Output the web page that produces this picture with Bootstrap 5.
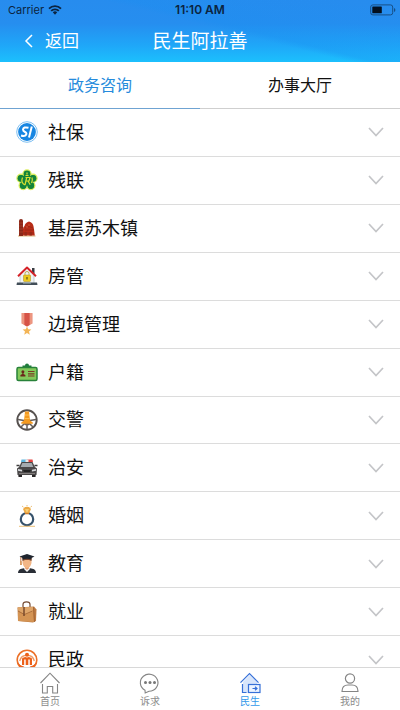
<!DOCTYPE html>
<html lang="zh-CN">
<head>
<meta charset="utf-8">
<meta name="viewport" content="width=device-width, initial-scale=1">
<title>民生阿拉善</title>
<link rel="stylesheet" href="https://cdn.jsdelivr.net/npm/bootstrap@5.3.0/dist/css/bootstrap.min.css">
<style>
body{font-family:Inter,"Noto Sans CJK SC",sans-serif;color:#111;background:#fff}
svg{display:block;flex:none}
.app-top{background:linear-gradient(14deg,transparent 54%,#1a8ef055 58%,transparent 92%),linear-gradient(#278cee 0,#268eef 38%,#1fa6f8 72%,#1cc0fd 100%)}
.status{height:20px;font-size:11px;line-height:20px;color:#0b2440}
.status time{font-size:12px;font-weight:600}
.titlebar{height:42px}
.titlebar h1{font-size:19px;line-height:44px}
.back{font-size:17px;line-height:42px;gap:12px}
.topics .nav-link{height:47px;font-size:16px;line-height:46px;color:#111;border-bottom:1px solid #cfcfcf!important}
.topics .nav-link.active{color:#268bdc;border-color:#6fa3d2!important}
.scroller{min-height:0;overflow-y:auto;scrollbar-width:none}
.scroller::-webkit-scrollbar{display:none}
.scroller .list-group{min-height:calc(100% + 16px)}
.scroller .list-group-item{min-height:44px;font-size:18px;line-height:20px;gap:10px;padding:0 16px;color:#111;border-color:#dcdcdc;border-width:0 0 1px}
.topic-name{padding-top:1px}
.tabbar{height:43px;border-top:1px solid #d8d8d8}
.tabbar a{font-size:10px;line-height:14px;color:#8b8b8b;padding-top:4px}
.tabbar a.active{color:#3299ea}
</style>
<script src="https://cdn.jsdelivr.net/npm/bootstrap@5.3.0/dist/js/bootstrap.bundle.min.js"></script>
</head>
<body class="vh-100 d-flex flex-column overflow-hidden">
<svg width="0" height="0" class="position-absolute" aria-hidden="true"><symbol id="chev" viewBox="0 0 16 10"><path d="M1 1l7 7.500 7-7.500" fill="none" stroke="#c4c5c8" stroke-width="1.700"/></symbol></svg>
<header class="app-top text-white">
  <div class="status row g-0 px-1">
    <div class="col d-flex align-items-center gap-1"><span class="ms-1">Carrier</span>
      <svg width="14" height="10" viewBox="0 0 14 10" fill="none" stroke="#0b2440" stroke-width="1.900"><path d="M1 3.600a8.600 8.600 0 0 1 12 0M3.200 5.900a5.400 5.400 0 0 1 7.600 0"/><path d="M4.800 7.300a3.200 3.200 0 0 1 4.400 0L7 9.700z" fill="#0b2440" stroke="none"/></svg>
    </div>
    <time class="col text-center">11:10 AM</time>
    <div class="col d-flex align-items-center justify-content-end">
      <svg width="26" height="12" viewBox="0 0 26 12"><rect x=".7" y=".9" width="22" height="10" rx="2.200" fill="none" stroke="#174f86"/><rect x="2.300" y="2.500" width="9.500" height="6.800" rx=".6" fill="#03101f"/><path d="M24 4v4q1.400-.6 1.400-2T24 4z" fill="#174f86"/></svg>
    </div>
  </div>
  <div class="titlebar row g-0">
    <div class="col"><button type="button" class="back btn p-0 border-0 rounded-0 text-white d-flex align-items-center ps-4">
      <svg width="9" height="14" viewBox="0 0 9 14"><path d="M8 1L2 7l6 6" fill="none" stroke="#fff" stroke-width="1.500"/></svg>返回</button></div>
    <h1 class="col-auto m-0 fw-normal">民生阿拉善</h1>
    <div class="col"></div>
  </div>
</header>
<nav class="topics nav nav-fill flex-nowrap">
  <button type="button" class="nav-link nav-item active p-0 border-0 bg-transparent">政务咨询</button>
  <button type="button" class="nav-link nav-item p-0 border-0 bg-transparent">办事大厅</button>
</nav>
<main class="scroller flex-grow-1">
<div class="list-group list-group-flush">
<button type="button" class="list-group-item list-group-item-action flex-fill d-flex align-items-center">
<svg width="22" height="22" viewBox="0 0 22 22"><circle cx="11" cy="11" r="10.300" fill="#fff" stroke="#5fb0ee" stroke-width=".8"/><circle cx="11" cy="11" r="8.900" fill="#1786e2"/><path d="M12.500 6.800Q7.500 5.500 7 8.500q0 1.600 2 2.500t1.200 2.500Q9 16 5 14.500M15.800 5.500L13 16.500" fill="none" stroke="#fff" stroke-width="2"/></svg>
<span class="topic-name flex-grow-1">社保</span><svg width="16" height="10"><use href="#chev"/></svg></button>
<button type="button" class="list-group-item list-group-item-action flex-fill d-flex align-items-center">
<svg width="22" height="22" viewBox="0 0 22 22"><g fill="#12833b" stroke="#dcee60" stroke-width="1.600"><circle cx="11" cy="5" r="3.900"/><circle cx="17" cy="9.300" r="3.900"/><circle cx="14.800" cy="16.500" r="3.900"/><circle cx="7.200" cy="16.500" r="3.900"/><circle cx="5" cy="9.300" r="3.900"/></g><g fill="#12833b"><circle cx="11" cy="5" r="3.400"/><circle cx="17" cy="9.300" r="3.400"/><circle cx="14.800" cy="16.500" r="3.400"/><circle cx="7.200" cy="16.500" r="3.400"/><circle cx="5" cy="9.300" r="3.400"/><circle cx="11" cy="11.300" r="5.500"/></g><path d="M6.500 8.500q-2 5 2.300 7.500M9.500 6.500h3M11 3.500v2M9.500 8.500h4.500l-1 3.500h-3M10.700 8.500l-1.700 7.500M12 12l2.200 3.700M16 8.500q1 3-.5 5.500" fill="none" stroke="#d8df32" stroke-width="1.200"/></svg>
<span class="topic-name flex-grow-1">残联</span><svg width="16" height="10"><use href="#chev"/></svg></button>
<button type="button" class="list-group-item list-group-item-action flex-fill d-flex align-items-center">
<svg width="22" height="22" viewBox="0 0 22 22"><path d="M2 19h17.500" stroke="#e2c38e" stroke-width="1.200"/><path d="M3 4q0-2 2-2t2 2v15H3z" fill="#8a2819"/><path d="M3 6h4M3 9h4M3 12h4M3 15h4" stroke="#b84631" stroke-width=".6"/><path d="M7 18.500V12q0-2 1.500-3 .6-3.300 4.500-4.500 4 1.200 4.500 4.800l.5 3 .8 6.200z" fill="#b82d18"/><path d="M9 11q4-3 8 0M9 13h9M7 16h11" stroke="#8f2414" stroke-width=".6" fill="none"/><path d="M8.500 18.500v-3q1.200-1.600 2.400 0v3M13.500 18.500v-3q1.200-1.600 2.400 0v3" fill="#962a18"/><path d="M12 8h2M10 10h2" stroke="#e26a42" stroke-width=".7"/></svg>
<span class="topic-name flex-grow-1">基层苏木镇</span><svg width="16" height="10"><use href="#chev"/></svg></button>
<button type="button" class="list-group-item list-group-item-action flex-fill d-flex align-items-center">
<svg width="22" height="22" viewBox="0 0 22 22"><path d="M16 3h2.500v6L16 7z" fill="#383c42"/><path d="M4 10l7-7 7 7v8.500H4z" fill="#eef2f4" stroke="#a2b3bb" stroke-width=".6"/><path d="M2 11.200L11 2.500l9 8.700" fill="none" stroke="#d52127" stroke-width="1.900" stroke-linejoin="round"/><rect x="7.500" y="10" width="7" height="6.500" rx=".7" fill="#ecca20" stroke="#b08d12" stroke-width=".5"/><path d="M9 10V8.500a2 2 0 0 1 4 0V10" fill="none" stroke="#bcaa51"/><path d="M11 12v2.500" stroke="#605216" stroke-width="1.200"/><path d="M1 17.500h20l.5 2.500H.5z" fill="#424e58"/><path d="M7 18h8" stroke="#a5b5bb"/></svg>
<span class="topic-name flex-grow-1">房管</span><svg width="16" height="10"><use href="#chev"/></svg></button>
<button type="button" class="list-group-item list-group-item-action flex-fill d-flex align-items-center">
<svg width="22" height="22" viewBox="0 0 22 22"><path d="M5.500 0h11v10.500L11 13.500l-5.500-3z" fill="#e98572"/><path d="M8.500 0h5v12L11 13.500 8.500 12z" fill="#d65347"/><path d="M7 0v11M15 0v11" stroke="#f5b79b" stroke-width=".7"/><path d="M11 13.500l1.200 2.800 3.200.2-2.400 2 .8 3.200-2.800-1.600-2.800 1.600.8-3.200-2.400-2 3.200-.2z" fill="#f3b557"/></svg>
<span class="topic-name flex-grow-1">边境管理</span><svg width="16" height="10"><use href="#chev"/></svg></button>
<button type="button" class="list-group-item list-group-item-action flex-fill d-flex align-items-center">
<svg width="22" height="22" viewBox="0 0 22 22"><path d="M6.500 7V4.500H9a2 2 0 1 1 4 0h2.500V7z" fill="#1f7c3c"/><rect x="1" y="6.500" width="20" height="13" rx="1.500" fill="#84c95b" stroke="#28823a" stroke-width="1.500"/><circle cx="6.900" cy="10.700" r="1.500" fill="#6b271a"/><path d="M6.300 11h1.200v2l1.900 1v1.600h-5V14l1.900-1z" fill="#6b271a"/><path d="M12 10.500h6.500M12 12.800h6.500M12 15h6.500" stroke="#7b3924" stroke-width="1.200"/></svg>
<span class="topic-name flex-grow-1">户籍</span><svg width="16" height="10"><use href="#chev"/></svg></button>
<button type="button" class="list-group-item list-group-item-action flex-fill d-flex align-items-center">
<svg width="22" height="22" viewBox="0 0 22 22"><circle cx="11" cy="11" r="9.700" fill="#fff" stroke="#56514f" stroke-width="1.900"/><path d="M2 10.500l6 1M20 10.500l-6 1M8 15l-3 3M14 15l3 3M11 15v5" stroke="#645e5a" stroke-width="1.500"/><circle cx="11" cy="13" r="3.600" fill="#766359"/><path d="M9 2.500h4l1 9 2.800 2v1.200H5.200v-1.200l2.800-2z" fill="#f49a20"/><path d="M9 6h4M8.600 9.500h4.800" stroke="#ffc050"/></svg>
<span class="topic-name flex-grow-1">交警</span><svg width="16" height="10"><use href="#chev"/></svg></button>
<button type="button" class="list-group-item list-group-item-action flex-fill d-flex align-items-center">
<svg width="22" height="22" viewBox="0 0 22 22"><path d="M5.500 2.500H11V5H5z" fill="#60b6df"/><path d="M11 2.500h5.500L17 5h-6z" fill="#e34542"/><path d="M9.500 2.500h3V5h-3z" fill="#e9e9e9"/><path d="M2 15h4v5H2.500zM16 15h4l-.5 5H16z" fill="#272425"/><path d="M5.500 5h11l2.500 5 2 1.500-.5 6.500h-19L1 11.500 3 10z" fill="#4a4849"/><path d="M6.300 6h9.400l1.600 4H4.700z" fill="#a5abb0"/><path d="M.5 8.500h3M18.500 8.500h3" stroke="#3e3c3c" stroke-width="1.500"/><path d="M2 12l4 .8v1.700l-4-.8zM20 12l-4 .8v1.700l4-.8z" fill="#d7dadd"/><path d="M7 13h8l-1 2H8z" fill="#222"/><path d="M3 16.500h16" stroke="#8a8583" stroke-width=".9"/></svg>
<span class="topic-name flex-grow-1">治安</span><svg width="16" height="10"><use href="#chev"/></svg></button>
<button type="button" class="list-group-item list-group-item-action flex-fill d-flex align-items-center">
<svg width="22" height="22" viewBox="0 0 22 22"><circle cx="11" cy="14.200" r="6.200" fill="none" stroke="#36526b" stroke-width="2.200"/><path d="M7 4l2-2h4l2 2-1.500 3.500L11 9.500 8.500 7.500z" fill="#edaa45"/><path d="M9 4l2 4 2-4z" fill="#f6cf77"/><path d="M6 1l1.500 1.200M16 1l-1.500 1.200M11 0v1.500M3 21.300h16" stroke="#ebc078"/><path d="M9 8.500h4" stroke="#ce7f2f" stroke-width="1.200"/></svg>
<span class="topic-name flex-grow-1">婚姻</span><svg width="16" height="10"><use href="#chev"/></svg></button>
<button type="button" class="list-group-item list-group-item-action flex-fill d-flex align-items-center">
<svg width="22" height="22" viewBox="0 0 22 22"><path d="M2 20q0-3.500 3.500-4.200L9 15h4l3.500.8Q20 16.500 20 20z" fill="#292e36"/><path d="M8.500 14.500h5L14 16l-3 3-3-3z" fill="#f5f5f5"/><path d="M9 12h4v3.200L11 17l-2-1.800z" fill="#e59b6e"/><path d="M6.500 5h9v5q-1 5-4.500 5t-4.500-5z" fill="#f2b686"/><path d="M6.500 4.500h9V8l-2.500-1H9L6.500 8z" fill="#7b482f"/><path d="M3.500 3.500L11 1l7.500 2.500L15.500 5v1.500Q11 5 6.500 6.500V5z" fill="#1f252e"/><path d="M4.800 4v6" stroke="#bc784d"/><path d="M4.200 8h1.400l.4 4H4z" fill="#d69a63"/></svg>
<span class="topic-name flex-grow-1">教育</span><svg width="16" height="10"><use href="#chev"/></svg></button>
<button type="button" class="list-group-item list-group-item-action flex-fill d-flex align-items-center">
<svg width="22" height="22" viewBox="0 0 22 22"><path d="M7 7V3.500Q7 .8 10.500.8T14 3.500V7" fill="none" stroke="#744a32" stroke-width="1.200"/><path d="M1.500 6.500L18 5.500l2.500 3-.5 11.500-3 1.500L2 20z" fill="#bd7b43"/><path d="M2 6.500h15l1 14.500-16-1z" fill="#d49454"/><path d="M1.500 6.500l16-.6-1 4.600-8 3.500-6-4z" fill="#dfa66a"/><path d="M2 10l6.500 3.500 8-3.500M17.500 6l1 15" fill="none" stroke="#9e602f" stroke-width=".8"/><path d="M8 6v9" stroke="#78482b" stroke-width="1.500"/></svg>
<span class="topic-name flex-grow-1">就业</span><svg width="16" height="10"><use href="#chev"/></svg></button>
<button type="button" class="list-group-item list-group-item-action flex-fill d-flex align-items-center">
<svg width="22" height="22" viewBox="0 0 22 22"><circle cx="11" cy="11" r="9.800" fill="#fff" stroke="#ec7027" stroke-width="1.600"/><path d="M3.700 12a7.500 7.500 0 0 1 14.600 0" fill="none" stroke="#f29a63" stroke-width="1.400"/><circle cx="11" cy="5.700" r="2" fill="#ec6019"/><path d="M6 16V9.500Q8.500 7 11 8.500 13.500 7 16 9.500V16h-2.200v-5.500h-1.500V16H9.700v-5.500H8.200V16z" fill="#ec6019"/><path d="M1.500 12q1.500 4.500 6.500 5.500l2 4Q3 20.500 1.500 12zM20.500 12q-1.500 4.500-6.500 5.500l-2 4q7-1 8.500-9.500z" fill="#ec6019"/></svg>
<span class="topic-name flex-grow-1">民政</span><svg width="16" height="10"><use href="#chev"/></svg></button>
</div>
</main>
<nav class="tabbar row g-0 bg-white flex-shrink-0">
<a href="#" class="col d-flex flex-column align-items-center text-decoration-none"><svg width="22" height="22" viewBox="0 0 22 22" fill="none" stroke="#858585" stroke-width="1.100"><path d="M1.500 11L11 1.200l9.500 9.800M3.500 12v9h4.800v-6.500h5.400V21h4.800v-9"/></svg>首页</a>
<a href="#" class="col d-flex flex-column align-items-center text-decoration-none"><svg width="22" height="22" viewBox="0 0 22 22"><path d="M6 18.200A8.800 8.500 0 1 1 10 19.200L6.200 21z" fill="none" stroke="#858585" stroke-width="1.100"/><g fill="#777"><circle cx="6.500" cy="10.500" r="1.500"/><circle cx="11" cy="10.500" r="1.500"/><circle cx="15.500" cy="10.500" r="1.500"/></g></svg>诉求</a>
<a href="#" class="active col d-flex flex-column align-items-center text-decoration-none" aria-current="page"><svg width="22" height="22" viewBox="0 0 22 22"><path d="M4 10l6.500-7 7.500 7v3H9.500v8H4z" fill="#d7e5fb"/><g fill="none" stroke="#3670d8" stroke-width="1.200"><path d="M1.500 10.700L10.500 1.500l9 9.200M3.500 12v8.500h4"/><rect x="9.500" y="12.500" width="11.500" height="8" fill="#edf4ff"/><path d="M13.500 16.500h4.500M16 14.700l2 1.800-2 1.800"/></g></svg>民生</a>
<a href="#" class="col d-flex flex-column align-items-center text-decoration-none"><svg width="22" height="22" viewBox="0 0 22 22" fill="none" stroke="#858585" stroke-width="1.200"><circle cx="11" cy="6.500" r="4.600"/><path d="M3 19.500q0-6.500 6-6.500h4q6 0 6 6.500z" stroke-linejoin="round"/></svg>我的</a>
</nav>
</body>
</html>
